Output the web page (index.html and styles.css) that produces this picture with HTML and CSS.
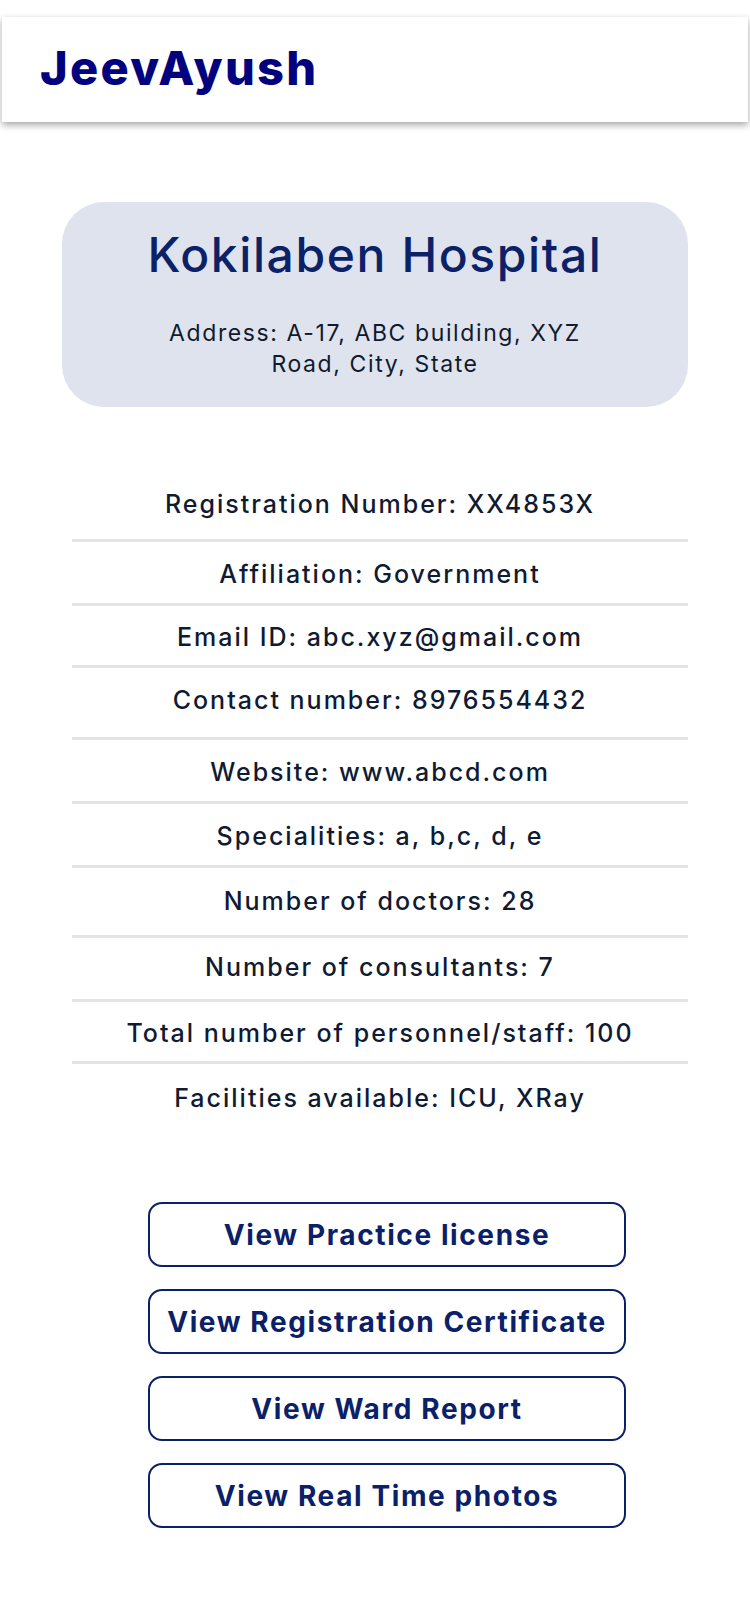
FILE: index.html
```html
<!DOCTYPE html>
<html lang="en">
<head>
<meta charset="utf-8">
<title>JeevAyush</title>
<link rel="stylesheet" href="styles.css">
</head>
<body>
<header class="topbar">
  <div class="brand">JeevAyush</div>
</header>
<main class="page">
  <section class="hospital-card">
    <h1 class="hospital-name">Kokilaben Hospital</h1>
    <p class="hospital-address">Address: A-17, ABC building, XYZ<br>Road, City, State</p>
  </section>
  <section class="details">
    <div class="row row--first">Registration Number: XX4853X</div>
    <div class="row">Affiliation: Government</div>
    <div class="row row--short">Email ID: abc.xyz@gmail.com</div>
    <div class="row row--tall">Contact number: 8976554432</div>
    <div class="row">Website: www.abcd.com</div>
    <div class="row">Specialities: a, b,c, d, e</div>
    <div class="row row--tall2">Number of doctors: 28</div>
    <div class="row row--mid">Number of consultants: 7</div>
    <div class="row row--short">Total number of personnel/staff: 100</div>
    <div class="row row--last">Facilities available: ICU, XRay</div>
  </section>
  <section class="actions">
    <button class="action-btn">View Practice license</button>
    <button class="action-btn">View Registration Certificate</button>
    <button class="action-btn">View Ward Report</button>
    <button class="action-btn">View Real Time photos</button>
  </section>
</main>
</body>
</html>
```
FILE: styles.css
```css
* { box-sizing: border-box; }
html, body { margin: 0; padding: 0; background: #fff; }
body {
  font-family: "Inter", "Open Sans", sans-serif;
  color: #0f1a33;
}
.topbar {
  margin: 17px 2px 0;
  height: 105px;
  background: #fff;
  box-shadow: 0 3px 7px rgba(0,0,0,0.35);
  display: flex;
  align-items: center;
  padding-left: 38px;
}
.brand {
  font-size: 47px;
  font-weight: 800;
  color: #02027f;
  letter-spacing: 2.3px;
  line-height: 1;
  margin-top: -4px;
}
.page { display: flex; flex-direction: column; }
.hospital-card {
  margin: 80px 62px 0;
  height: 205px;
  background: #dfe3ee;
  border-radius: 42px;
  display: flex;
  flex-direction: column;
  align-items: center;
  padding-top: 22px;
}
.hospital-name {
  margin: 0;
  font-size: 48px;
  font-weight: 500;
  color: #0b2268;
  line-height: 62px;
  letter-spacing: 1.6px;
}
.hospital-address {
  margin: 32px 0 0;
  font-size: 23px;
  font-weight: 400;
  line-height: 31px;
  text-align: center;
  color: #101a2e;
  letter-spacing: 1.6px;
}
.details {
  margin: 65px 62px 0 72px;
  display: flex;
  flex-direction: column;
}
.row {
  height: 64px;
  display: flex;
  align-items: center;
  justify-content: center;
  font-size: 25px;
  font-weight: 500;
  letter-spacing: 2px;
  color: #0f1a33;
  border-bottom: 3px solid #e4e4e4;
  padding-top: 2px;
}
.row--first { height: 70px; padding-top: 0; padding-bottom: 4px; }
.row--short { height: 62px; }
.row--tall { height: 72px; padding-bottom: 8px; }
.row--tall2 { height: 70px; padding-bottom: 4px; }
.row--mid { padding-top: 0; padding-bottom: 4px; }
.row--last { border-bottom: none; height: 66px; }
.actions {
  margin: 72px 0 0 148px;
  display: flex;
  flex-direction: column;
  gap: 22px;
  padding-bottom: 90px;
}
.action-btn {
  width: 478px;
  height: 65px;
  background: #fff;
  border: 2.5px solid #0a2068;
  border-radius: 14px;
  font-family: "Inter", "Open Sans", sans-serif;
  font-size: 28px;
  font-weight: 700;
  letter-spacing: 1.6px;
  color: #0a2068;
  padding: 0;
  cursor: pointer;
}
```
